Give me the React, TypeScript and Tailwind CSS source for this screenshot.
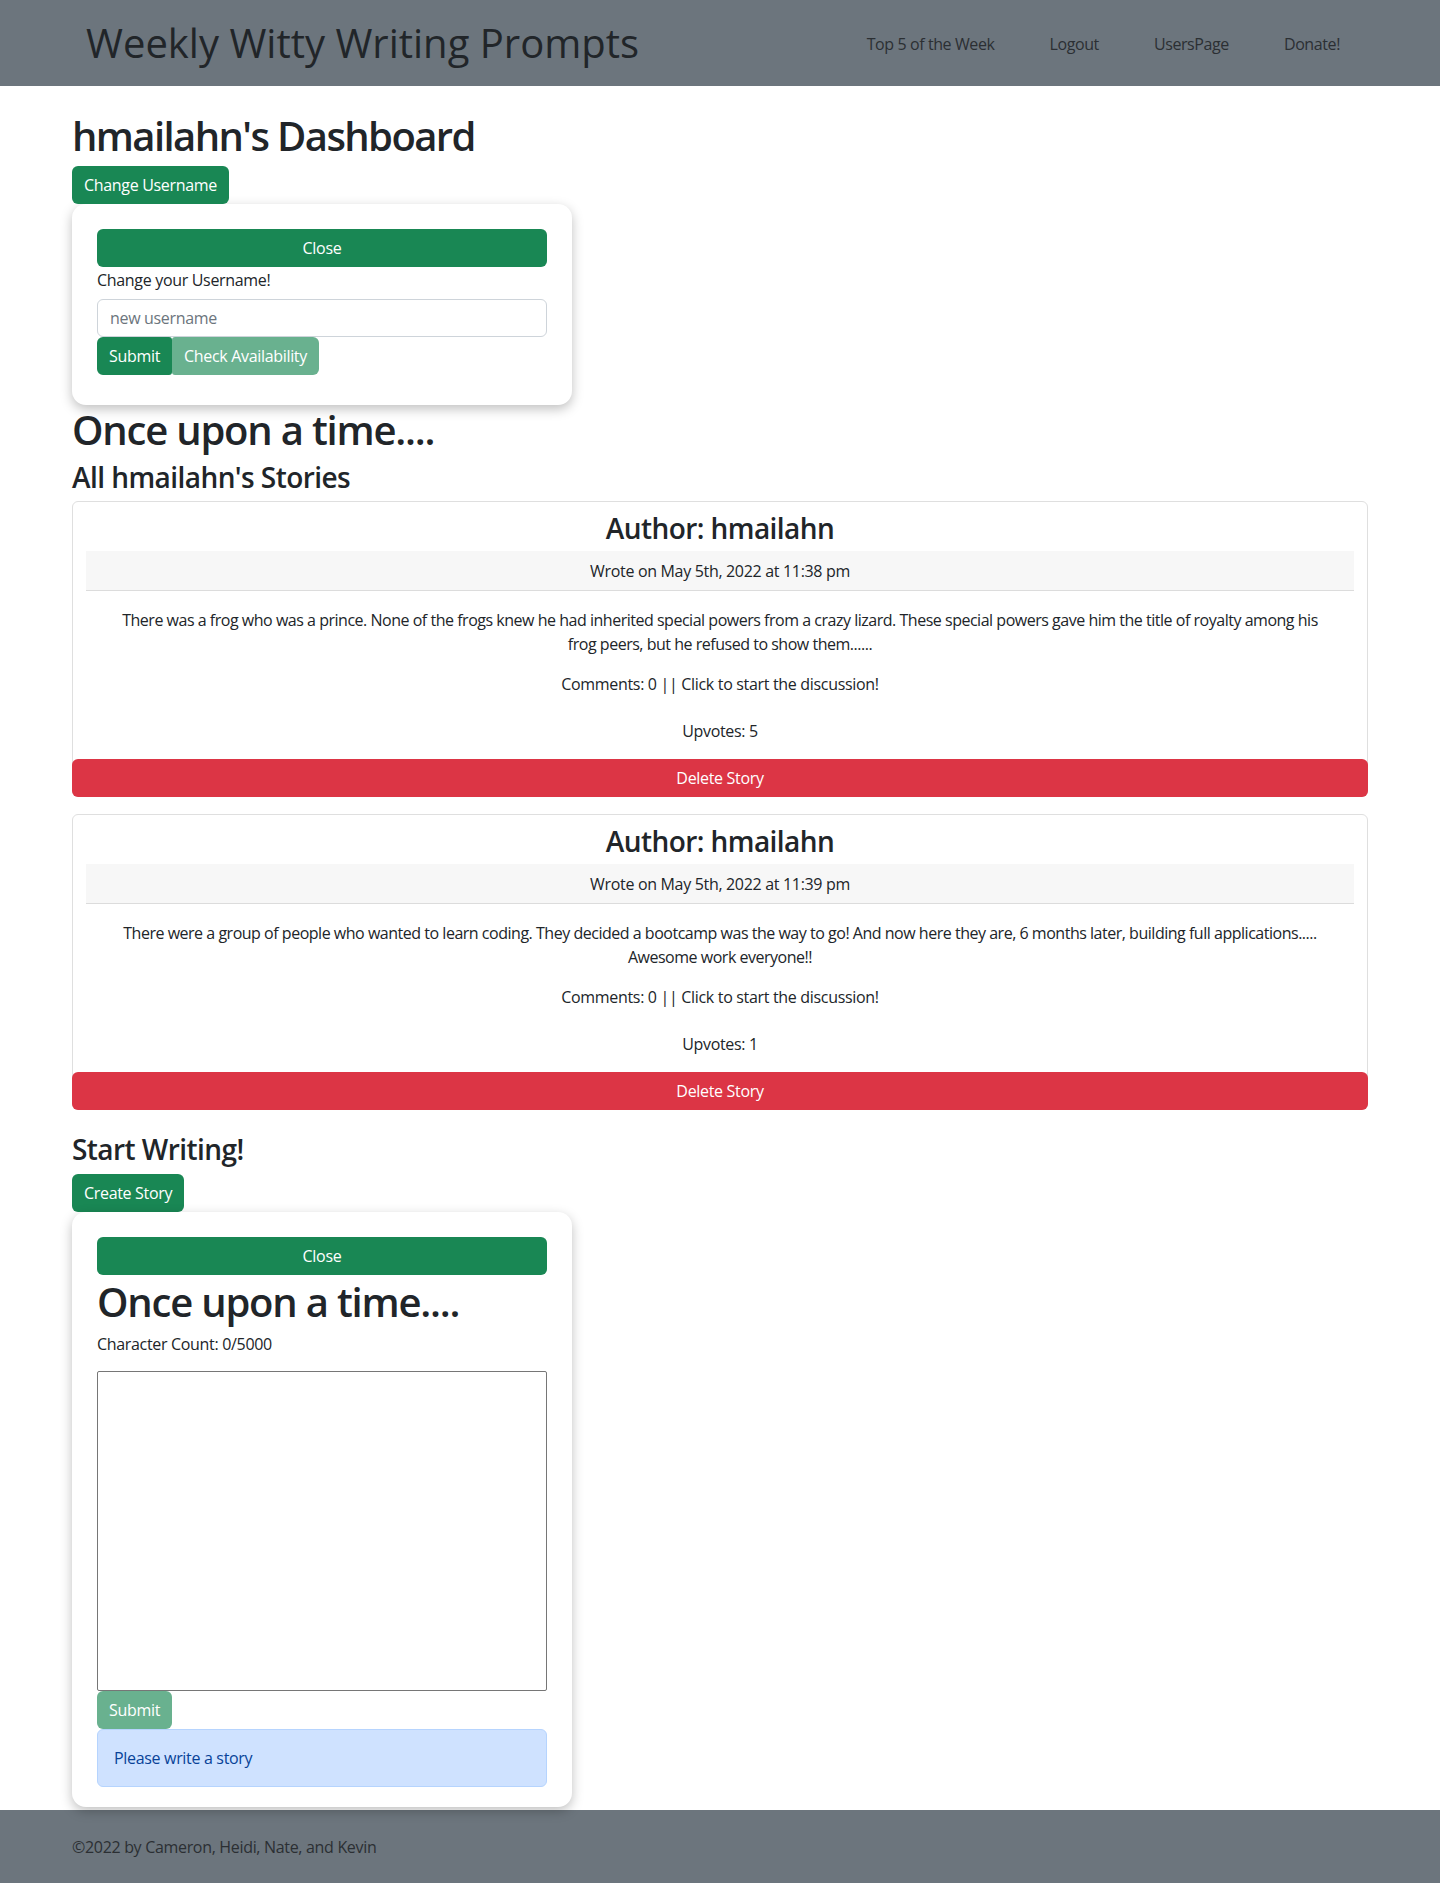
import React from "react";

const font = "font-['Open_Sans',_'Noto_Sans',_sans-serif]";

function StoryCard({ date, text, upvotes }: { date: string; text: string; upvotes: number }) {
  return (
    <div className="border border-[#dfdfdf] rounded-[6px] flex flex-col">
      <div className="px-[13px] pt-[9px]">
        <h3 className="text-[28px] leading-[34px] text-center font-semibold tracking-[-0.02em] text-[#212529]">Author: hmailahn</h3>
        <div className="mt-[6px] h-[40px] bg-[#f7f7f7] border-b border-[#dcdcdc] flex items-center justify-center text-[16px] text-[#212529]">
          {date}
        </div>
        <p className="mt-[17px] px-[28px] text-center text-[16px] leading-[24px] text-[#212529] tracking-[-0.03em]">{text}</p>
        <p className="mt-[16px] text-center text-[16px] leading-[24px] text-[#212529]">
          Comments: 0 || Click to start the discussion!
        </p>
        <p className="mt-[23px] text-center text-[16px] leading-[24px] text-[#212529]">Upvotes: {upvotes}</p>
      </div>
      <button className="mt-[16px] -mx-px -mb-px h-[38px] bg-[#dc3545] text-white text-[16px] rounded-[6px]">
        Delete Story
      </button>
    </div>
  );
}

export default function App() {
  return (
    <div className={`${font} min-h-[1883px] flex flex-col bg-white text-[#212529] tracking-[-0.02em]`}>
      <nav className="h-[86px] bg-[#6c757d] flex items-center justify-between pl-[86px] pr-[100px]">
        <div className="text-[40px] leading-[48px] text-[#212529] font-medium tracking-normal">Weekly Witty Writing Prompts</div>
        <div className="flex items-center gap-[55px] text-[16px] text-[#2b2f33] mt-[1px] tracking-[-0.025em]">
          <span>Top 5 of the Week</span>
          <span>Logout</span>
          <span>UsersPage</span>
          <span>Donate!</span>
        </div>
      </nav>

      <main className="flex-1 px-[72px]">
        <h1 className="mt-[26px] text-[40px] leading-[48px] font-semibold tracking-[-0.04em]">hmailahn's Dashboard</h1>
        <button className="mt-[6px] h-[38px] px-[12px] bg-[#198754] text-white text-[16px] rounded-[6px]">
          Change Username
        </button>

        <div className="w-[500px] rounded-[14px] bg-white shadow-[0_4px_12px_rgba(0,0,0,0.25)] px-[25px] pt-[25px] pb-[30px]">
          <button className="w-full h-[38px] bg-[#198754] text-white text-[16px] rounded-[6px]">Close</button>
          <p className="text-[16px] leading-[24px] mt-[1px]">Change your Username!</p>
          <input
            className="mt-[7px] w-full h-[38px] border border-[#ced4da] rounded-[6px] px-[12px] text-[16px] placeholder:text-[#6c757d] outline-none"
            placeholder="new username"
          />
          <div className="flex">
            <button className="h-[38px] px-[12px] bg-[#198754] text-white text-[16px] rounded-l-[6px] rounded-r-[3px]">Submit</button>
            <button className="h-[38px] px-[12px] bg-[#69b18f] text-white text-[16px] rounded-r-[6px] rounded-l-[3px]">
              Check Availability
            </button>
          </div>
        </div>

        <h1 className="mt-[1px] text-[40px] leading-[48px] font-semibold tracking-[-0.03em]">Once upon a time....</h1>
        <h3 className="mt-[6px] text-[28px] leading-[34px] font-semibold tracking-[-0.02em]">All hmailahn's Stories</h3>

        <div className="mt-[7px] flex flex-col gap-[17px]">
          <StoryCard
            date="Wrote on May 5th, 2022 at 11:38 pm"
            text="There was a frog who was a prince. None of the frogs knew he had inherited special powers from a crazy lizard. These special powers gave him the title of royalty among his frog peers, but he refused to show them......"
            upvotes={5}
          />
          <StoryCard
            date="Wrote on May 5th, 2022 at 11:39 pm"
            text="There were a group of people who wanted to learn coding. They decided a bootcamp was the way to go! And now here they are, 6 months later, building full applications..... Awesome work everyone!!"
            upvotes={1}
          />
        </div>

        <h3 className="mt-[22px] text-[28px] leading-[34px] font-semibold tracking-[-0.02em]">Start Writing!</h3>
        <button className="mt-[8px] h-[38px] px-[12px] bg-[#198754] text-white text-[16px] rounded-[6px]">
          Create Story
        </button>

        <div className="w-[500px] rounded-[14px] bg-white shadow-[0_4px_12px_rgba(0,0,0,0.25)] px-[25px] pt-[25px] pb-[20px] relative z-10">
          <button className="w-full h-[38px] bg-[#198754] text-white text-[16px] rounded-[6px]">Close</button>
          <h1 className="mt-[3px] text-[40px] leading-[48px] font-semibold tracking-[-0.03em]">Once upon a time....</h1>
          <p className="mt-[6px] text-[16px] leading-[24px]">Character Count: 0/5000</p>
          <textarea className="mt-[15px] block w-full h-[320px] border border-[#767676] rounded-[2px] resize-none outline-none" />
          <button className="h-[38px] px-[12px] bg-[#69b18f] text-white text-[16px] rounded-[6px]">Submit</button>
          <div className="h-[58px] border border-[#b6d4fe] bg-[#cfe2ff] text-[#084298] rounded-[6px] px-[16px] flex items-center text-[16px]">
            Please write a story
          </div>
        </div>
      </main>

      <footer className="h-[73px] bg-[#6c757d] flex items-center px-[72px] text-[16px] text-[#2b2f33]">
        ©2022 by Cameron, Heidi, Nate, and Kevin
      </footer>
    </div>
  );
}
